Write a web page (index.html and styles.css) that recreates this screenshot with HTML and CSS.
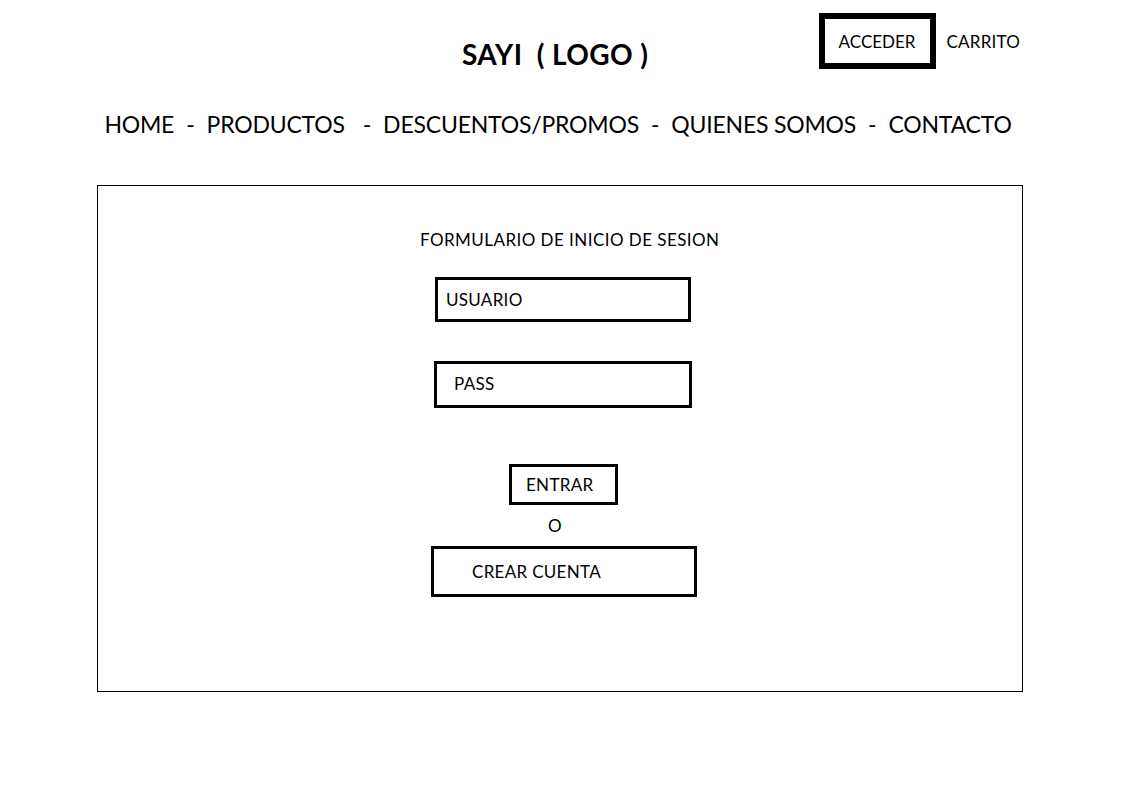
FILE: index.html
```html
<!DOCTYPE html>
<html lang="es">

<head>
    <meta charset="UTF-8">
    <meta name="viewport" content="width=device-width, initial-scale=1.0">
    <title>SAYI - Inicio de sesion</title>
    <link rel="stylesheet" href="styles.css">
</head>

<body>
    <div class="page">
        <header class="topbar">
            <h1 class="logo">SAYI &nbsp;( LOGO )</h1>
            <div class="account">
                <a class="access" href="#">ACCEDER</a>
                <a class="cart" href="#">CARRITO</a>
            </div>
        </header>
        <nav class="menu">
            <a href="#">HOME</a>
            <span class="sep">-</span>
            <a href="#">PRODUCTOS</a>
            <span class="sep wide">-</span>
            <a href="#">DESCUENTOS/PROMOS</a>
            <span class="sep">-</span>
            <a href="#">QUIENES SOMOS</a>
            <span class="sep">-</span>
            <a href="#">CONTACTO</a>
        </nav>
        <main class="panel">
            <form class="login">
                <h2>FORMULARIO DE INICIO DE SESION</h2>
                <div class="field user">USUARIO</div>
                <div class="field pass">PASS</div>
                <button class="btn enter" type="button">ENTRAR</button>
                <span class="or">O</span>
                <button class="btn create" type="button">CREAR CUENTA</button>
            </form>
        </main>
    </div>
</body>

</html>
```

FILE: styles.css
```css
body {
    margin: 0;
    background: #fff;
    color: #000;
    font-family: Lato, "Open Sans", Arial, sans-serif;
}

a {
    color: #000;
    text-decoration: none;
}

.page {
    width: 926px;
    margin-left: 97px;
}

.topbar {
    display: flex;
    align-items: flex-start;
    height: 104px;
    padding-top: 13px;
    box-sizing: border-box;
}

.logo {
    margin: 25px 0 0 365px;
    font-size: 28px;
    font-weight: 700;
    letter-spacing: 0.4px;
    line-height: 32px;
}

.account {
    display: flex;
    align-items: center;
    margin-left: auto;
    margin-right: 3px;
}

.access {
    display: block;
    width: 117px;
    height: 56px;
    border: 6px solid #000;
    box-sizing: border-box;
    font-size: 17px;
    line-height: 46px;
    text-align: center;
}

.cart {
    margin-left: 11px;
    font-size: 17px;
    letter-spacing: 0.2px;
}

.menu {
    display: flex;
    justify-content: center;
    align-items: center;
    height: 40px;
    margin-left: -4px;
    font-size: 23px;
    letter-spacing: -0.2px;
}

.sep {
    margin: 0 12px;
}

.sep.wide {
    margin-left: 18px;
}

.panel {
    margin-top: 41px;
    height: 507px;
    border: 1px solid #000;
    box-sizing: border-box;
}

.login {
    display: flex;
    flex-direction: column;
    align-items: flex-start;
    padding: 43px 0 0 322px;
    font-size: 17px;
    letter-spacing: 0.3px;
}

.login h2 {
    margin: 0;
    font-size: 17px;
    font-weight: 400;
    line-height: 22px;
    letter-spacing: 0.45px;
}

.field {
    box-sizing: border-box;
    width: 256px;
    height: 45px;
    border: 3px solid #000;
    line-height: 39px;
}

.user {
    margin: 26px 0 0 15px;
    padding-left: 8px;
}

.pass {
    margin: 39px 0 0 14px;
    width: 258px;
    height: 47px;
    padding-left: 17px;
}

.btn {
    box-sizing: border-box;
    border: 3px solid #000;
    background: #fff;
    color: #000;
    font-family: inherit;
    font-size: 17px;
    letter-spacing: inherit;
    text-align: left;
    cursor: pointer;
}

.enter {
    margin: 56px 0 0 89px;
    width: 109px;
    height: 41px;
    padding: 0 0 0 14px;
}

.or {
    margin: 9px 0 0 128px;
    line-height: 24px;
}

.create {
    margin: 8px 0 0 11px;
    width: 266px;
    height: 51px;
    padding: 0 0 0 38px;
}
```
